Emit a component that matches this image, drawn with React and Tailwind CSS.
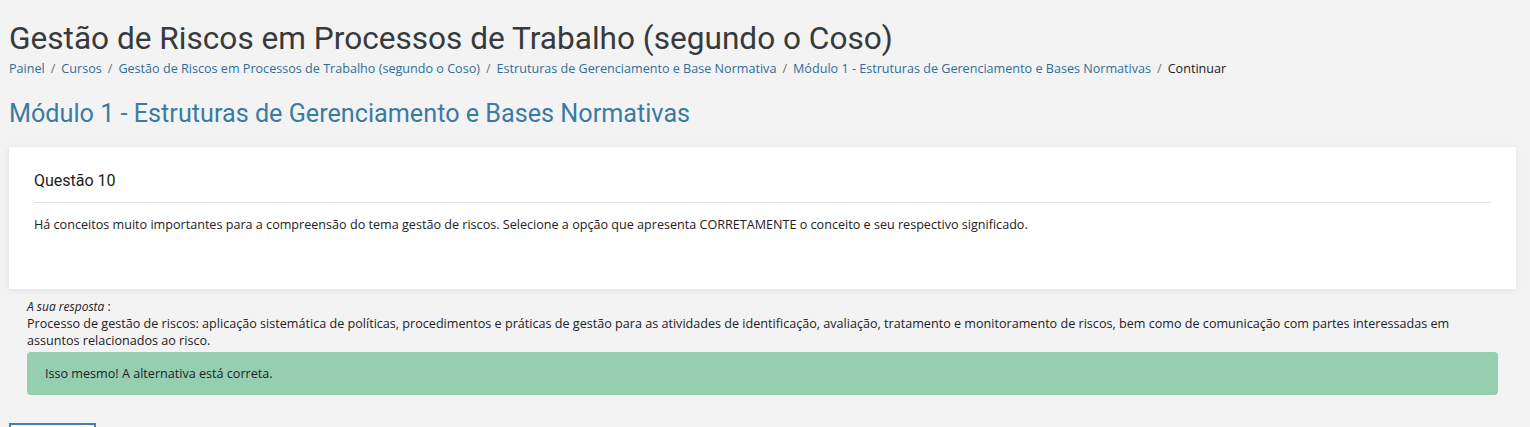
export default function App() {
  const crumbs = [
    'Painel',
    'Cursos',
    'Gestão de Riscos em Processos de Trabalho (segundo o Coso)',
    'Estruturas de Gerenciamento e Base Normativa',
    'Módulo 1 - Estruturas de Gerenciamento e Bases Normativas',
  ];

  return (
    <div className="h-[427px] overflow-hidden bg-[#f3f3f3] pl-[9px] pr-[14px] pt-[18px] text-[#373a3c] font-['Open_Sans',sans-serif]">
      {/* Page header */}
      <h1 className="font-['Roboto',sans-serif] text-[31.6px] leading-[42px] text-[#373a3c]">
        Gestão de Riscos em Processos de Trabalho (segundo o Coso)
      </h1>
      <nav className="mt-[-1px] flex items-center text-[12.6px] leading-[20px]">
        {crumbs.map((c) => (
          <span key={c} className="flex items-center">
            <a className="text-[#2f6e9a]">{c}</a>
            <span className="px-[6px] text-[#6a737b]">/</span>
          </span>
        ))}
        <span className="text-[#1d2125]">Continuar</span>
      </nav>

      <h2 className="mt-[19px] font-['Roboto',sans-serif] text-[25.2px] leading-[32px] text-[#3a7ba5]">
        Módulo 1 - Estruturas de Gerenciamento e Bases Normativas
      </h2>

      {/* Question card */}
      <div className="mt-[17px] bg-white px-[25px] pt-[22px] pb-[54px] shadow-[0_1px_6px_rgba(0,0,0,0.08)]">
        <h3 className="font-['Roboto',sans-serif] text-[16px] leading-[24px] text-[#1d2125] pb-[9px] border-b border-[#e3e3e3]">
          Questão 10
        </h3>
        <p className="mt-[12px] text-[12.6px] leading-[20px] text-[#1d2125]">
          Há conceitos muito importantes para a compreensão do tema gestão de riscos. Selecione a opção que apresenta CORRETAMENTE o conceito e seu respectivo significado.
        </p>
      </div>

      {/* Answer */}
      <div className="px-[18px] pt-[9px]">
        <p className="text-[12px] leading-[17px] text-[#1d2125]">
          <em>A sua resposta</em> :
        </p>
        <p className="text-[12.6px] leading-[17px] text-[#1d2125]">
          Processo de gestão de riscos: aplicação sistemática de políticas, procedimentos e práticas de gestão para as atividades de identificação, avaliação, tratamento e monitoramento de riscos, bem como de comunicação com partes interessadas em assuntos relacionados ao risco.
        </p>
        <div className="mt-[3px] rounded-[4px] bg-[#96cfb0] px-[18px] py-[12px] text-[12.6px] leading-[19px] text-[#1d2125]">
          Isso mesmo! A alternativa está correta.
        </div>
      </div>

      <div className="mt-[28px]">
        <button className="h-[30px] w-[87px] border-2 border-[#4380b0] bg-white"></button>
      </div>
    </div>
  );
}
